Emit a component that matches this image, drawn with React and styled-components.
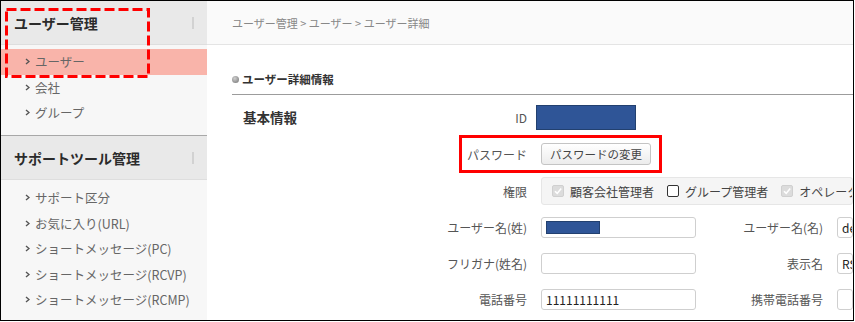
import React from "react";
import styled, { createGlobalStyle } from "styled-components";

const GlobalStyle = createGlobalStyle`
  html, body {
    margin: 0;
    padding: 0;
    background: #fff;
  }
  body {
    font-family: "Noto Sans CJK JP", "Noto Sans", sans-serif;
  }
  * {
    box-sizing: border-box;
  }
`;

const Frame = styled.div`
  position: relative;
  width: 854px;
  height: 321px;
  border: 1px solid #000;
  display: flex;
  overflow: hidden;
  background: #fff;
`;

const Sidebar = styled.aside`
  width: 206px;
  flex-shrink: 0;
  background: #f7f7f7;
  display: flex;
  flex-direction: column;
  overflow: hidden;
`;

const MenuHeader = styled.div`
  height: ${(p) => (p.$first ? "44px" : "45px")};
  flex-shrink: 0;
  display: flex;
  align-items: center;
  justify-content: space-between;
  padding: 0 13px;
  background: #e9e9e9;
  border-top: ${(p) => (p.$first ? "none" : "1px solid #a8a8a8")};
  border-bottom: 1px solid #dedede;
  font-size: 14px;
  font-weight: bold;
  color: #2b2b2b;
`;

const Divider = styled.span`
  width: 2px;
  height: 12px;
  background: #d2d2d2;
`;

const MenuList = styled.ul`
  flex-shrink: 0;
  list-style: none;
  margin: 0;
  padding: ${(p) => (p.$first ? "4px 0 9.5px" : "5px 0 0")};
`;

const MenuItem = styled.li`
  height: 25.5px;
  display: flex;
  align-items: center;
  gap: 5px;
  padding-left: 24px;
  font-size: 12.5px;
  color: #666;
  background: ${(p) => (p.$active ? "#f9b4aa" : "transparent")};
  white-space: nowrap;
`;

const Main = styled.main`
  flex: 1;
  min-width: 0;
  display: flex;
  flex-direction: column;
  overflow: hidden;
`;

const Breadcrumb = styled.div`
  height: 44px;
  flex-shrink: 0;
  display: flex;
  align-items: center;
  padding-left: 25px;
  background: #fafafa;
  border-bottom: 1px solid #e4e4e4;
  font-size: 11px;
  color: #888;
`;

const Content = styled.div`
  padding-left: 25px;
`;

const Heading = styled.h2`
  margin: 0;
  padding: 26px 0 7px;
  display: flex;
  align-items: center;
  gap: 3px;
  line-height: 16px;
  font-size: 11.5px;
  font-weight: bold;
  color: #333;
  border-bottom: 1px solid #9c9c9c;
`;

const Bullet = styled.span`
  width: 7px;
  height: 7px;
  border-radius: 50%;
  background: radial-gradient(circle at 40% 35%, #d0d0d0, #707070);
`;

const Form = styled.div`
  padding: 4px 0 0 11px;
`;

const Row = styled.div`
  height: ${(p) => p.$h || 36}px;
  display: grid;
  grid-template-columns: 120px 150px 155px 113px 1fr;
  column-gap: 14px;
  align-items: center;
`;

const SectionTitle = styled.span`
  font-size: 13.5px;
  font-weight: bold;
  color: #333;
`;

const Label = styled.span`
  grid-column: ${(p) => p.$col || 2};
  text-align: right;
  font-size: 12px;
  color: #555;
  white-space: nowrap;
`;

const Redacted = styled.span`
  display: block;
  width: ${(p) => p.$w}px;
  height: ${(p) => p.$h}px;
  margin-left: ${(p) => p.$ml || 0}px;
  background: #2f5597;
  border: 1px solid #22406f;
`;

const Button = styled.button`
  justify-self: start;
  height: 22px;
  padding: 0 8px;
  border: 1px solid #c4c4c4;
  border-radius: 3px;
  background: linear-gradient(#ffffff, #ececec);
  font-family: inherit;
  font-size: 11.5px;
  color: #444;
`;

const Panel = styled.div`
  grid-column: 3 / -1;
  height: 28px;
  display: flex;
  align-items: center;
  padding-left: 10px;
  gap: 13px;
  background: #f5f5f5;
  border: 1px solid #e6e6e6;
  border-radius: 3px;
  white-space: nowrap;
  overflow: hidden;
`;

const Check = styled.label`
  display: flex;
  align-items: center;
  gap: 6px;
  font-size: 12px;
  color: #444;
`;

const Box = styled.span`
  width: 12px;
  height: 12px;
  display: flex;
  align-items: center;
  justify-content: center;
  border-radius: 2px;
  border: 1px solid ${(p) => (p.$checked ? "#d0d0d0" : "#333")};
  background: ${(p) => (p.$checked ? "#dcdcdc" : "#fff")};
`;

const Input = styled.div`
  grid-column: ${(p) => p.$col || 3};
  height: 21px;
  display: flex;
  align-items: center;
  padding: 0 4px;
  border: 1px solid #cfcfcf;
  border-radius: 3px;
  background: #fff;
  font-size: 12px;
  color: #222;
  white-space: nowrap;
  overflow: hidden;
`;

const Highlight = styled.div`
  position: absolute;
  left: 458px;
  top: 134px;
  width: 203px;
  height: 38px;
  border: 3px solid #ff0000;
  pointer-events: none;
`;

const DashedMark = styled.svg`
  position: absolute;
  left: 4px;
  top: 7px;
  pointer-events: none;
`;

const Chevron = () => (
  <svg width="5" height="7" viewBox="0 0 5 7">
    <path d="M1 1 L4 3.5 L1 6" fill="none" stroke="#555" strokeWidth="1.4" />
  </svg>
);

const Tick = () => (
  <svg width="10" height="10" viewBox="0 0 10 10">
    <path d="M2 5.2 L4.2 7.4 L8.2 2.6" fill="none" stroke="#fff" strokeWidth="1.6" />
  </svg>
);

const userMenu = ["ユーザー", "会社", "グループ"];
const supportMenu = [
  "サポート区分",
  "お気に入り(URL)",
  "ショートメッセージ(PC)",
  "ショートメッセージ(RCVP)",
  "ショートメッセージ(RCMP)",
  "ショートメッセージテンプレート",
];

export default function App() {
  return (
    <>
      <GlobalStyle />
      <Frame>
        <Sidebar>
          <MenuHeader $first>
            ユーザー管理
            <Divider />
          </MenuHeader>
          <MenuList $first>
            {userMenu.map((m, i) => (
              <MenuItem key={m} $active={i === 0}>
                <Chevron />
                {m}
              </MenuItem>
            ))}
          </MenuList>
          <MenuHeader>
            サポートツール管理
            <Divider />
          </MenuHeader>
          <MenuList>
            {supportMenu.map((m) => (
              <MenuItem key={m}>
                <Chevron />
                {m}
              </MenuItem>
            ))}
          </MenuList>
        </Sidebar>

        <Main>
          <Breadcrumb>ユーザー管理 &gt; ユーザー &gt; ユーザー詳細</Breadcrumb>
          <Content>
            <Heading>
              <Bullet />
              ユーザー詳細情報
            </Heading>
            <Form>
              <Row>
                <SectionTitle>基本情報</SectionTitle>
                <Label>ID</Label>
                <Redacted $w={100} $h={25} $ml={-5} />
              </Row>
              <Row $h={38}>
                <Label>パスワード</Label>
                <Button>パスワードの変更</Button>
              </Row>
              <Row>
                <Label>権限</Label>
                <Panel>
                  <Check>
                    <Box $checked>
                      <Tick />
                    </Box>
                    顧客会社管理者
                  </Check>
                  <Check>
                    <Box />
                    グループ管理者
                  </Check>
                  <Check>
                    <Box $checked>
                      <Tick />
                    </Box>
                    オペレータ
                  </Check>
                </Panel>
              </Row>
              <Row>
                <Label>ユーザー名(姓)</Label>
                <Input>
                  <Redacted $w={54} $h={13} />
                </Input>
                <Label $col={4}>ユーザー名(名)</Label>
                <Input $col={5}>demo</Input>
              </Row>
              <Row>
                <Label>フリガナ(姓名)</Label>
                <Input />
                <Label $col={4}>表示名</Label>
                <Input $col={5}>RS</Input>
              </Row>
              <Row>
                <Label>電話番号</Label>
                <Input>11111111111</Input>
                <Label $col={4}>携帯電話番号</Label>
                <Input $col={5} />
              </Row>
            </Form>
          </Content>
        </Main>

        <Highlight />
        <DashedMark width="146" height="71" viewBox="0 0 146 71">
          <rect
            x="1.5"
            y="1.5"
            width="142"
            height="67"
            fill="none"
            stroke="#ff0000"
            strokeWidth="3"
            strokeDasharray="10 4"
          />
        </DashedMark>
      </Frame>
    </>
  );
}
